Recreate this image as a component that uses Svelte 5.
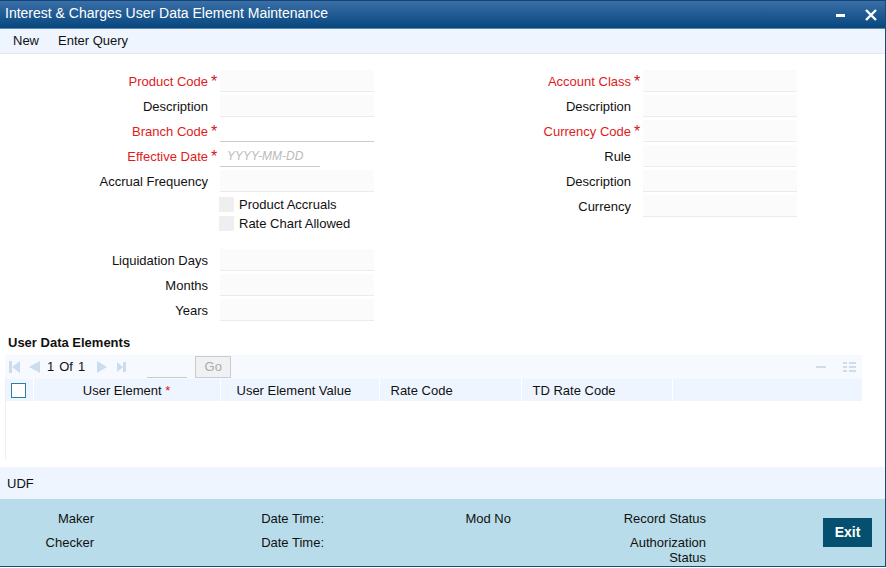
<script lang="ts">
  type Field = { id: string; label: string; required?: boolean; editable?: boolean; date?: boolean };

  const leftFields: Field[] = [
    { id: 'product-code', label: 'Product Code', required: true },
    { id: 'product-desc', label: 'Description' },
    { id: 'branch-code', label: 'Branch Code', required: true, editable: true },
    { id: 'effective-date', label: 'Effective Date', required: true, editable: true, date: true },
    { id: 'accrual-freq', label: 'Accrual Frequency' }
  ];

  const liquidationFields: Field[] = [
    { id: 'liq-days', label: 'Liquidation Days' },
    { id: 'liq-months', label: 'Months' },
    { id: 'liq-years', label: 'Years' }
  ];

  const rightFields: Field[] = [
    { id: 'account-class', label: 'Account Class', required: true },
    { id: 'class-desc', label: 'Description' },
    { id: 'currency-code', label: 'Currency Code', required: true },
    { id: 'rule', label: 'Rule' },
    { id: 'rule-desc', label: 'Description' },
    { id: 'currency', label: 'Currency' }
  ];

  const audit = [
    'Maker', 'Date Time:', 'Mod No', 'Record Status',
    'Checker', 'Date Time:', '', 'Authorization Status'
  ];

  let productAccruals = $state(false);
  let rateChart = $state(false);
  let allSelected = $state(false);
</script>

{#snippet fieldRow(f: Field)}
  <div class="field">
    <label for={f.id} class:required={f.required}>{f.label}</label>
    <span class="mark">{f.required ? '*' : ''}</span>
    <input
      id={f.id}
      type="text"
      class:date={f.date}
      placeholder={f.date ? 'YYYY-MM-DD' : null}
      required={f.required}
      disabled={!f.editable}
    />
  </div>
{/snippet}

<div class="window">
  <header class="titlebar">
    <h1>Interest &amp; Charges User Data Element Maintenance</h1>
    <button class="win-btn" aria-label="Minimize">
      <svg width="11" height="12" viewBox="0 0 11 12"><path d="M1 5h9v3H1z" fill="#fff" /></svg>
    </button>
    <button class="win-btn" aria-label="Close">
      <svg width="12" height="12" viewBox="0 0 12 12"><path d="M1 1l10 10M11 1l-10 10" stroke="#fff" stroke-width="2.4" /></svg>
    </button>
  </header>

  <nav class="menu">
    <button>New</button>
    <button>Enter Query</button>
  </nav>

  <form class="form">
    <div class="column">
      {#each leftFields as f (f.id)}
        {@render fieldRow(f)}
      {/each}
      <div class="checks">
        <label><input type="checkbox" bind:checked={productAccruals} disabled />Product Accruals</label>
        <label><input type="checkbox" bind:checked={rateChart} disabled />Rate Chart Allowed</label>
      </div>
      {#each liquidationFields as f (f.id)}
        {@render fieldRow(f)}
      {/each}
    </div>
    <div class="column">
      {#each rightFields as f (f.id)}
        {@render fieldRow(f)}
      {/each}
    </div>
  </form>

  <section class="elements">
    <h2>User Data Elements</h2>
    <div class="toolbar">
      <button class="icon" aria-label="First page" disabled>
        <svg width="11" height="12" viewBox="0 0 11 12"><path d="M0 0h3v12H0zM11 0v12L3 6z" /></svg>
      </button>
      <button class="icon prev" aria-label="Previous page" disabled>
        <svg width="11" height="12" viewBox="0 0 11 12"><path d="M11 0v12L0 6z" /></svg>
      </button>
      <span class="pages"><span>1</span><span>Of</span><span>1</span></span>
      <button class="icon" aria-label="Next page" disabled>
        <svg width="10" height="12" viewBox="0 0 10 12"><path d="M0 0v12l10-6z" /></svg>
      </button>
      <button class="icon last" aria-label="Last page" disabled>
        <svg width="10" height="12" viewBox="0 0 10 12"><path d="M0 1v10l6-5zM6 1h3v10H6z" /></svg>
      </button>
      <input class="goto" type="text" aria-label="Page number" />
      <button class="go" disabled>Go</button>
      <span class="tools">
        <button class="icon" aria-label="Delete row" disabled>
          <svg width="10" height="12" viewBox="0 0 10 12"><path d="M0 5h10v2H0z" /></svg>
        </button>
        <button class="icon" aria-label="Single record view" disabled>
          <svg width="13" height="12" viewBox="0 0 13 12">
            <path d="M0 1h4v2H0zM6 1h7v2H6zM0 5h4v2H0zM6 5h7v2H6zM0 9h4v2H0zM6 9h7v2H6z" />
          </svg>
        </button>
      </span>
    </div>
    <div class="grid-body">
      <table>
        <thead>
          <tr>
            <th class="c-check"><input type="checkbox" aria-label="Select all" bind:checked={allSelected} /></th>
            <th class="c-element">User Element <span class="star">*</span></th>
            <th class="c-value">User Element Value</th>
            <th class="c-rate">Rate Code</th>
            <th class="c-td">TD Rate Code</th>
            <th></th>
          </tr>
        </thead>
        <tbody></tbody>
      </table>
    </div>
  </section>

  <div class="udf"><a href="#udf">UDF</a></div>

  <footer class="footer">
    <div class="audit">
      {#each audit as item}
        <span>{item}</span>
      {/each}
    </div>
    <button class="exit">Exit</button>
  </footer>
</div>

<style>
  :global(body) {
    background: #fff;
  }

  .window {
    border-right: 1px solid #1b4a72;
    border-bottom: 1px solid #1b4a72;
    font: 13px/15px "Liberation Sans", Arial, sans-serif;
    color: #111;
  }

  button,
  input {
    font: inherit;
    color: inherit;
    margin: 0;
    padding: 0;
    border: 0;
    border-radius: 0;
    background: none;
    box-sizing: border-box;
  }

  svg {
    display: block;
  }

  .titlebar {
    display: flex;
    align-items: center;
    gap: 19px;
    height: 29px;
    box-sizing: border-box;
    padding: 0 8px 0 5px;
    border-top: 1px solid #12467a;
    border-bottom: 1px solid #5f86a8;
    background: linear-gradient(#3a6ea7, #07477e);
  }

  h1 {
    flex: 1;
    margin: 0;
    padding-bottom: 3px;
    font-size: 14px;
    line-height: 16px;
    font-weight: normal;
    color: #fff;
  }

  .menu {
    display: flex;
    gap: 19px;
    padding: 4px 13px 5px;
    border-bottom: 1px solid #e6e9ed;
    background: #eef5ff;
  }

  .form {
    display: grid;
    grid-template-columns: 1fr 1fr;
    padding: 16px 39px 14px 0;
  }

  .column {
    display: flex;
    flex-direction: column;
    gap: 3px;
  }

  .field {
    display: grid;
    grid-template-columns: 208px 12px 154px;
    align-items: center;
  }

  .field label {
    text-align: right;
  }

  .field .required {
    color: #e01b1b;
  }

  .mark {
    color: #d4151b;
    padding-left: 3px;
    font-size: 16px;
  }

  .field input {
    height: 22px;
    border-bottom: 1px solid #ccc;
  }

  .field input:disabled {
    background: #fbfbfb;
    border-bottom-color: #ebebeb;
  }

  .field .date {
    width: 100px;
    padding-left: 7px;
    font-size: 12px;
  }

  .date::placeholder {
    color: #bbb;
    font-style: italic;
  }

  .checks {
    padding: 0 0 13px 219px;
  }

  .checks label {
    display: flex;
    align-items: center;
    gap: 5px;
    height: 19px;
  }

  input[type='checkbox'] {
    appearance: none;
    width: 15px;
    height: 15px;
    background: #fff;
    border: 1px solid #2b7ea6;
  }

  input[type='checkbox']:disabled {
    background: #f0efef;
    border: 0;
  }

  .elements {
    padding: 0 23px 8px 5px;
  }

  h2 {
    margin: 0;
    padding: 0 3px 5px;
    font-size: 13px;
    line-height: 15px;
  }

  .toolbar {
    display: flex;
    align-items: center;
    height: 24px;
    padding: 0 6px 1px 4px;
    box-sizing: border-box;
    background: #f6f9fe;
  }

  .icon {
    fill: #cbdcec;
  }

  .prev {
    margin-left: 9px;
  }

  .pages {
    display: flex;
    gap: 5px;
    margin: 0 12px 0 7px;
  }

  .last {
    margin-left: 10px;
  }

  .goto {
    width: 40px;
    height: 22px;
    margin: 0 8px 0 20px;
    border-bottom: 1px solid #ccc;
  }

  .go {
    width: 36px;
    height: 22px;
    border: 1px solid #c9cdd2;
    background: #f0f1f3;
    color: #aaa;
  }

  .tools {
    display: flex;
    gap: 17px;
    margin-left: auto;
  }

  .tools .icon {
    fill: #d0dcea;
  }

  .grid-body {
    min-height: 80px;
    border-left: 1px solid #eceff3;
  }

  table {
    width: 100%;
    border-collapse: collapse;
    table-layout: fixed;
  }

  th {
    height: 22px;
    padding: 0;
    font-weight: normal;
    text-align: left;
    background: #eef5ff;
    border-right: 1px solid #fff;
    box-sizing: border-box;
  }

  th:last-child {
    border-right: 0;
  }

  .c-check {
    width: 27px;
    padding-left: 5px;
  }

  .c-check input {
    display: block;
  }

  .c-element {
    width: 187px;
    text-align: center;
  }

  .c-value {
    width: 159px;
    padding-left: 16px;
  }

  .c-rate {
    width: 142px;
    padding-left: 11px;
  }

  .c-td {
    width: 151px;
    padding-left: 11px;
  }

  .star {
    color: #d4151b;
  }

  .udf {
    padding: 9px 7px 8px;
    background: #eef5ff;
  }

  .udf a {
    color: inherit;
    text-decoration: none;
  }

  .footer {
    display: flex;
    align-items: center;
    padding-right: 13px;
    background: #b8dcea;
  }

  .audit {
    flex: 1;
    display: grid;
    grid-template-columns: 94fr 230fr 187fr 195fr 117fr;
    row-gap: 9px;
    padding: 12px 0 1px;
    text-align: right;
  }

  .audit span {
    max-width: 90px;
    justify-self: end;
  }

  .audit span:nth-child(4n + 1) {
    grid-column: 1;
  }

  .exit {
    width: 49px;
    height: 29px;
    background: #05506f;
    color: #fff;
    font-size: 14px;
    font-weight: bold;
  }
</style>
